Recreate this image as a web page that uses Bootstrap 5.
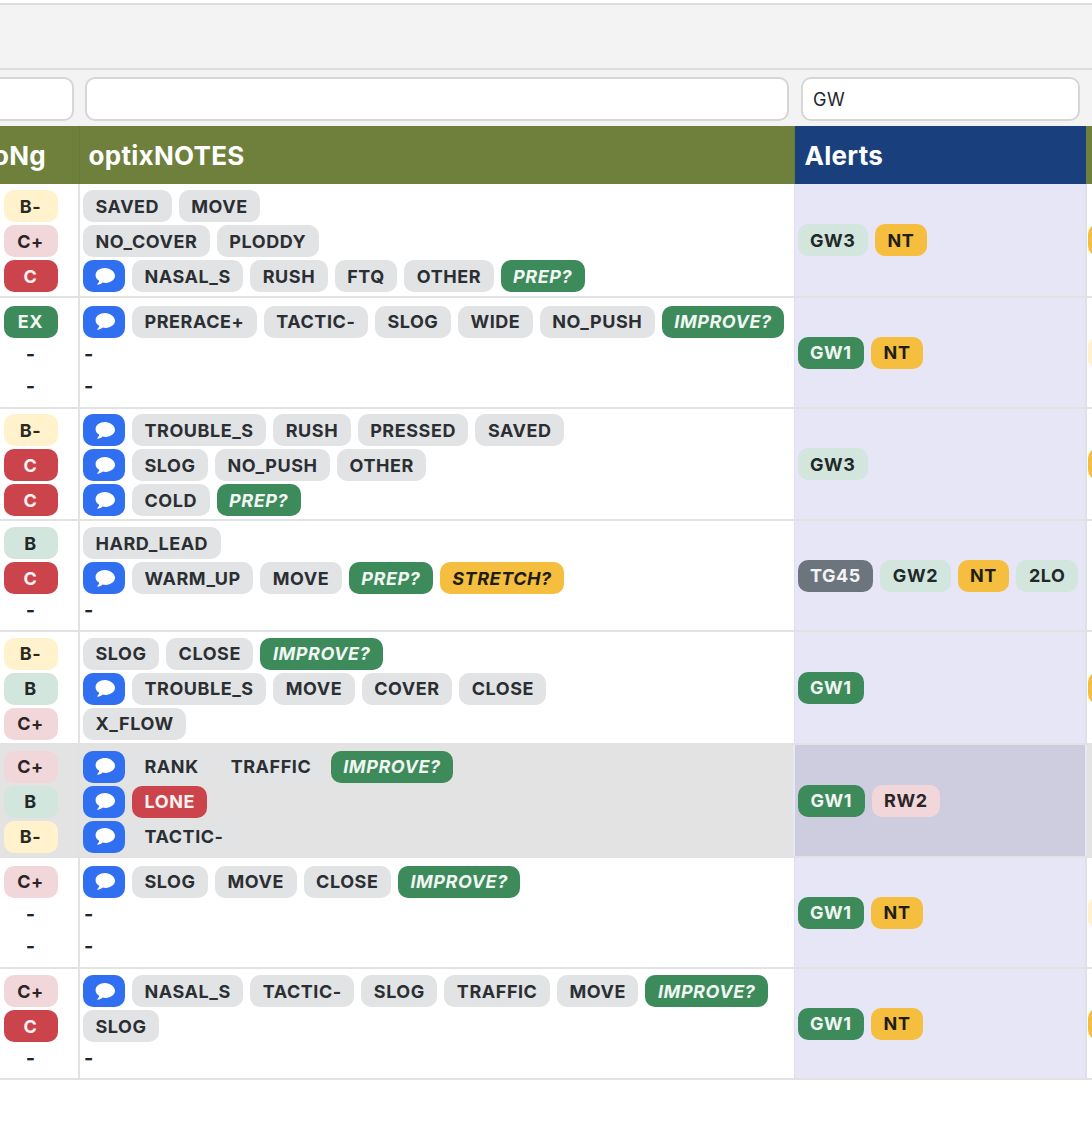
<!DOCTYPE html>
<html lang="en">
<head>
  <meta charset="UTF-8">
  <meta name="viewport" content="width=device-width, initial-scale=1.0">
  <title>optixNOTES</title>
  <link href="https://cdn.jsdelivr.net/npm/bootstrap@5.3.0/dist/css/bootstrap.min.css" rel="stylesheet">
  <style>
    html, body { background: #fff; overflow: hidden; }
    body { font-family: Inter, "Liberation Sans", sans-serif; color: #212529; }

    .top-gap { height: 3px; background: #fff; }
    .top-bar { height: 67px; background: #f3f3f3; border-top: 2px solid #dcdcdc; border-bottom: 2px solid #dcdcdc; }

    .grid-wrap { overflow: hidden; }
    .notes-grid { table-layout: fixed; width: 1190px; margin: 0 0 0 -17px; border-collapse: collapse; }
    .notes-grid .c-grade { width: 96px; }
    .notes-grid .c-notes { width: 715px; }
    .notes-grid .c-alerts { width: 292px; }
    .notes-grid .c-next { width: 87px; }

    .filter-row td { background: #f3f3f3; height: 56px; padding: 7px 6px 5px 6px; vertical-align: top; }
    .filter-row td.f-grade { padding-right: 5px; }
    .filter-row td.f-notes { padding-right: 5px; }
    .filter-row td.f-alerts { padding-left: 7px; }
    .filter-input {
      height: 44px; border: 2px solid #d6d6d6; border-radius: 10px; background: #fff;
      font-size: 18px; letter-spacing: .6px; padding: 0 10px; color: #212529; box-shadow: none;
    }

    .head-row th {
      height: 58px; padding: 0 9px; color: #fff; font-size: 26px; font-weight: 700; letter-spacing: .3px;
      background: #6f7f3c; vertical-align: middle; border-right: 1px solid #68773a;
    }
    .head-row th.h-grade { padding-left: 10px; }
    .head-row th.h-alerts { background: #193f7c; border-right: 0; padding-left: 10px; }
    .head-row th.h-next { border-right: 0; }

    .body-row td {
      padding: 2px 0 0 0; vertical-align: middle; background: #fff;
      border-bottom: 2px solid #e2e2e2;
    }
    .body-row td.t-grade { border-right: 2px solid #e2e2e2; }
    .body-row td.t-notes { padding-left: 3px; }
    .body-row td.t-alerts { background: #e6e6f7; padding: 0 0 0 3px; border-right: 2px solid #dfdfee; border-left: 1px solid #dfdfee; }
    .body-row td.t-next { padding: 0 0 0 1px; }

    .body-row.is-picked td { background: #e3e3e3; }
    .body-row.is-picked td.t-alerts { background: #cdcddf; border-left: 2px solid #e6e6f7; border-right: 2px solid #e6e6f7; }

    .line { display: flex; align-items: center; gap: 7px; height: 32px; }
    .line + .line:not(.dash-line) { margin-top: 3px; }
    .line.dash-line { font-size: 20px; font-weight: 700; padding-left: 1px; }
    .t-grade .line { justify-content: center; }
    .t-grade .line.dash-line { padding-left: 0; }

    .chip {
      display: inline-flex; align-items: center; justify-content: center; height: 32px; padding: 0 12.5px;
      border-radius: 10px; font-size: 18px; font-weight: 700; letter-spacing: .55px; white-space: nowrap;
    }
    .t-grade .chip { width: 54px; padding: 0; }
    .chip-gray { background: #e2e3e5; color: #2b2f33; }
    .chip-green { background: #3d8a5b; color: #f1f6f3; }
    .chip-lgreen { background: #d3e6dd; color: #22282a; }
    .chip-red { background: #cb444b; color: #fdf2f2; }
    .chip-pink { background: #f2d7da; color: #2b2528; }
    .chip-cream { background: #fff2cc; color: #2b2a22; }
    .chip-yellow { background: #f5be3e; color: #1f1d14; }
    .chip-slate { background: #6c757d; color: #f3f4f5; }
    .chip-ask { font-style: italic; }
    .chip-msg { background: #2f6ff0; width: 42px; padding: 0; flex: none; }
    .chip-msg svg { width: 21px; height: 19px; display: block; }
  </style>
</head>
<body>
  <div class="top-gap"></div>
  <div class="top-bar"></div>

  <div class="grid-wrap">
    <table class="notes-grid">
      <colgroup>
        <col class="c-grade"><col class="c-notes"><col class="c-alerts"><col class="c-next">
      </colgroup>
      <thead>
        <tr class="filter-row">
          <td class="f-grade"><input type="text" class="form-control filter-input"></td>
          <td class="f-notes"><input type="text" class="form-control filter-input"></td>
          <td class="f-alerts"><input type="text" class="form-control filter-input" value="GW"></td>
          <td><input type="text" class="form-control filter-input"></td>
        </tr>
        <tr class="head-row">
          <th class="h-grade">oNg</th>
          <th>optixNOTES</th>
          <th class="h-alerts">Alerts</th>
          <th class="h-next"></th>
        </tr>
      </thead>
      <tbody id="rows"></tbody>
    </table>
  </div>

  <script src="https://cdn.jsdelivr.net/npm/bootstrap@5.3.0/dist/js/bootstrap.bundle.min.js"></script>
  <script>
    // '*' = message button, '-' = empty line, 'name:style' = coloured chip
    const rows = [
      { h: 113, grades: ['B-', 'C+', 'C'], next: 'yellow',
        notes: [['SAVED', 'MOVE'], ['NO_COVER', 'PLODDY'], ['*', 'NASAL_S', 'RUSH', 'FTQ', 'OTHER', 'PREP?:ask']],
        alerts: ['GW3:lgreen', 'NT:yellow'] },
      { h: 111, grades: ['EX', '-', '-'], next: 'cream',
        notes: [['*', 'PRERACE+', 'TACTIC-', 'SLOG', 'WIDE', 'NO_PUSH', 'IMPROVE?:ask'], ['-'], ['-']],
        alerts: ['GW1:green', 'NT:yellow'] },
      { h: 112, grades: ['B-', 'C', 'C'], next: 'yellow',
        notes: [['*', 'TROUBLE_S', 'RUSH', 'PRESSED', 'SAVED'], ['*', 'SLOG', 'NO_PUSH', 'OTHER'], ['*', 'COLD', 'PREP?:ask']],
        alerts: ['GW3:lgreen'] },
      { h: 111, grades: ['B', 'C', '-'],
        notes: [['HARD_LEAD'], ['*', 'WARM_UP', 'MOVE', 'PREP?:ask', 'STRETCH?:askyellow'], ['-']],
        alerts: ['TG45:slate', 'GW2:lgreen', 'NT:yellow', '2LO:lgreen'] },
      { h: 113, grades: ['B-', 'B', 'C+'], next: 'yellow',
        notes: [['SLOG', 'CLOSE', 'IMPROVE?:ask'], ['*', 'TROUBLE_S', 'MOVE', 'COVER', 'CLOSE'], ['X_FLOW']],
        alerts: ['GW1:green'] },
      { h: 113, grades: ['C+', 'B', 'B-'], picked: true,
        notes: [['*', 'RANK', 'TRAFFIC', 'IMPROVE?:ask'], ['*', 'LONE:red'], ['*', 'TACTIC-']],
        alerts: ['GW1:green', 'RW2:pink'] },
      { h: 111, grades: ['C+', '-', '-'], next: 'cream',
        notes: [['*', 'SLOG', 'MOVE', 'CLOSE', 'IMPROVE?:ask'], ['-'], ['-']],
        alerts: ['GW1:green', 'NT:yellow'] },
      { h: 111, grades: ['C+', 'C', '-'], next: 'yellow',
        notes: [['*', 'NASAL_S', 'TACTIC-', 'SLOG', 'TRAFFIC', 'MOVE', 'IMPROVE?:ask'], ['SLOG'], ['-']],
        alerts: ['GW1:green', 'NT:yellow'] }
    ];

    const gradeStyle = { 'EX': 'green', 'B': 'lgreen', 'B-': 'cream', 'C+': 'pink', 'C': 'red' };
    const bubble = '<svg viewBox="0 0 20 18" aria-hidden="true"><path fill="#fff" d="M10.500 1C5.500 1 1.500 4 1.500 7.700c0 2.200 1.400 4.200 3.500 5.400-.2 1.200-.9 2.300-1.900 3.200-.2.2 0 .5.200.5 2-.1 3.800-.8 5-2 .9.200 1.800.300 2.700.300 5 0 9-3 9-6.700S15.500 1 10.500 1z"/></svg>';

    function chip(token) {
      if (token === '*') return '<span class="chip chip-msg">' + bubble + '</span>';
      const [text, style] = token.split(':');
      let cls = 'chip-' + (style || 'gray');
      if (style === 'ask') cls = 'chip-green chip-ask';
      if (style === 'askyellow') cls = 'chip-yellow chip-ask';
      return `<span class="chip ${cls}">${text}</span>`;
    }

    function line(tokens) {
      if (tokens[0] === '-') return '<div class="line dash-line">-</div>';
      return '<div class="line">' + tokens.map(chip).join('') + '</div>';
    }

    document.getElementById('rows').innerHTML = rows.map(row => `
      <tr class="body-row${row.picked ? ' is-picked' : ''}" style="height: ${row.h}px">
        <td class="t-grade">${row.grades.map(g => g === '-' ? line(['-']) : line([g + ':' + gradeStyle[g]])).join('')}</td>
        <td class="t-notes">${row.notes.map(line).join('')}</td>
        <td class="t-alerts">${line(row.alerts)}</td>
        <td class="t-next">${row.next ? line(['NT:' + row.next]) : ''}</td>
      </tr>`).join('');
  </script>
</body>
</html>
